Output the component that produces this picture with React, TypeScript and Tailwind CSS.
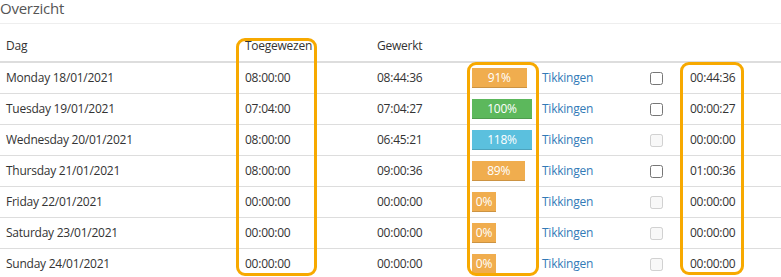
const rows = [
  { day: "Monday 18/01/2021", assigned: "08:00:00", worked: "08:44:36", pct: 91, color: "bg-[#f0ad4e]", enabled: true, diff: "00:44:36" },
  { day: "Tuesday 19/01/2021", assigned: "07:04:00", worked: "07:04:27", pct: 100, color: "bg-[#5cb85c]", enabled: true, diff: "00:00:27" },
  { day: "Wednesday 20/01/2021", assigned: "08:00:00", worked: "06:45:21", pct: 118, color: "bg-[#5bc0de]", enabled: false, diff: "00:00:00" },
  { day: "Thursday 21/01/2021", assigned: "08:00:00", worked: "09:00:36", pct: 89, color: "bg-[#f0ad4e]", enabled: true, diff: "01:00:36" },
  { day: "Friday 22/01/2021", assigned: "00:00:00", worked: "00:00:00", pct: 0, color: "bg-[#f0ad4e]", enabled: false, diff: "00:00:00" },
  { day: "Saturday 23/01/2021", assigned: "00:00:00", worked: "00:00:00", pct: 0, color: "bg-[#f0ad4e]", enabled: false, diff: "00:00:00" },
  { day: "Sunday 24/01/2021", assigned: "00:00:00", worked: "00:00:00", pct: 0, color: "bg-[#f0ad4e]", enabled: false, diff: "00:00:00" },
];

const cols = "grid grid-cols-[239px_132px_95px_70px_108px_40px_97px]";

const App = () => {
  return (
    <div className="relative w-[781px] h-[277px] overflow-hidden bg-white text-[#333] font-['Open_Sans',sans-serif] text-[12px] tracking-[-0.25px]">
      <div className="h-[24px] border-b border-[#eee]">
        <h2 className="text-[15px] leading-[16px] text-[#555]">Overzicht</h2>
      </div>

      <div className={`${cols} h-[39px] items-end pb-[6px] border-b-2 border-[#ddd] px-[6px]`}>
        <span>Dag</span>
        <span>Toegewezen</span>
        <span>Gewerkt</span>
        <span />
        <span />
        <span />
        <span />
      </div>

      {rows.map((r) => (
        <div key={r.day} className={`${cols} h-[31px] items-center border-b border-[#ddd] px-[6px]`}>
          <span>{r.day}</span>
          <span>{r.assigned}</span>
          <span>{r.worked}</span>
          <div>
            <div
              className={`${r.color} h-[20px] min-w-[24px] text-white text-center leading-[20px] shadow-[inset_0_-1px_0_rgba(0,0,0,0.15)]`}
              style={{ width: Math.min(r.pct, 100) * 0.6 }}
            >
              {r.pct}%
            </div>
          </div>
          <a href="#" className="text-[#337ab7]">Tikkingen</a>
          <div className="flex items-center">
            <input type="checkbox" disabled={!r.enabled} className="m-0 w-[13px] h-[13px]" />
          </div>
          <span>{r.diff}</span>
        </div>
      ))}

      <div className="absolute left-[236px] top-[38px] w-[81px] h-[238px] border-[3px] border-[#f7a900] rounded-[9px]" />
      <div className="absolute left-[467px] top-[62px] w-[72px] h-[214px] border-[3px] border-[#f7a900] rounded-[9px]" />
      <div className="absolute left-[680px] top-[62px] w-[64px] h-[213px] border-[3px] border-[#f7a900] rounded-[9px]" />
    </div>
  );
};

export default App;
